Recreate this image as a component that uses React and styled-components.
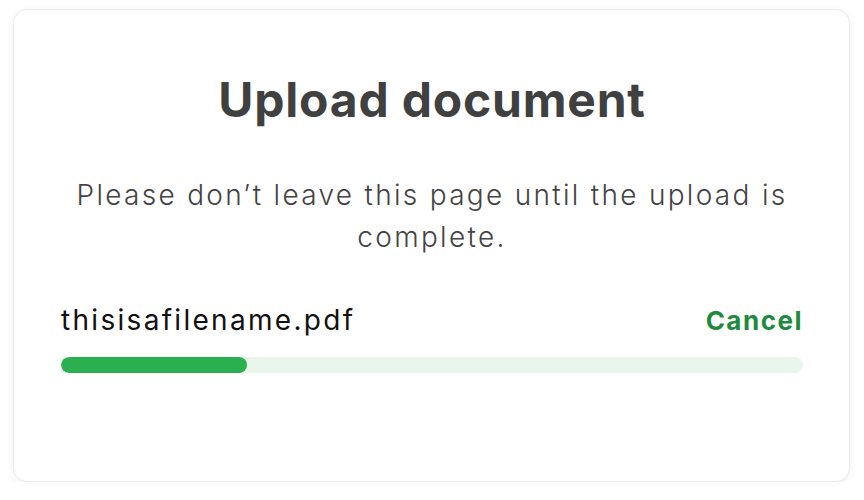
import React from 'react';
import styled, {createGlobalStyle} from 'styled-components';

const GlobalStyle = createGlobalStyle`
  html, body {
    margin: 0;
    padding: 0;
    background: #ffffff;
  }
  body {
    font-family: "Inter", "Noto Sans", sans-serif;
  }
`;

const Page = styled.div`
  padding: 9px 14px 0 13px;
`;

const Card = styled.div`
  box-sizing: border-box;
  height: 473px;
  padding: 0 46px 0 47px;
  background: #fff;
  border: 1px solid #ebebeb;
  border-radius: 14px;
  box-shadow: 0 2px 8px rgba(0, 0, 0, 0.06);
  display: flex;
  flex-direction: column;
`;

const Title = styled.h1`
  margin: 62px 0 0;
  text-align: center;
  font-size: 48px;
  line-height: 56px;
  font-weight: 700;
  color: #404040;
  letter-spacing: 0.8px;
`;

const Message = styled.p`
  margin: 46px 0 0;
  text-align: center;
  font-size: 28px;
  line-height: 42px;
  font-weight: 300;
  color: #444;
  letter-spacing: 2.3px;
`;

const FileRow = styled.div`
  margin-top: 42px;
  display: flex;
  justify-content: space-between;
  align-items: center;
`;

const FileName = styled.span`
  font-size: 28px;
  line-height: 40px;
  color: #111;
  letter-spacing: 2.3px;
`;

const CancelButton = styled.button`
  border: none;
  background: none;
  padding: 0;
  font-family: inherit;
  font-size: 26px;
  font-weight: 700;
  color: #1d8a3c;
  letter-spacing: 1.5px;
  cursor: pointer;
`;

const Track = styled.div`
  margin-top: 17px;
  height: 16px;
  border-radius: 8px;
  background: #e9f6ec;
  overflow: hidden;
`;

const Fill = styled.div`
  height: 100%;
  border-radius: 8px;
  background: #2ab04f;
`;

export default function App() {
  const progress = 25;
  return <Page>
    <GlobalStyle/>
    <Card>
      <Title>Upload document</Title>
      <Message>Please don’t leave this page until the upload is complete.</Message>
      <FileRow>
        <FileName>thisisafilename.pdf</FileName>
        <CancelButton>Cancel</CancelButton>
      </FileRow>
      <Track>
        <Fill style={{width: `${progress}%`}}/>
      </Track>
    </Card>
  </Page>;
}
